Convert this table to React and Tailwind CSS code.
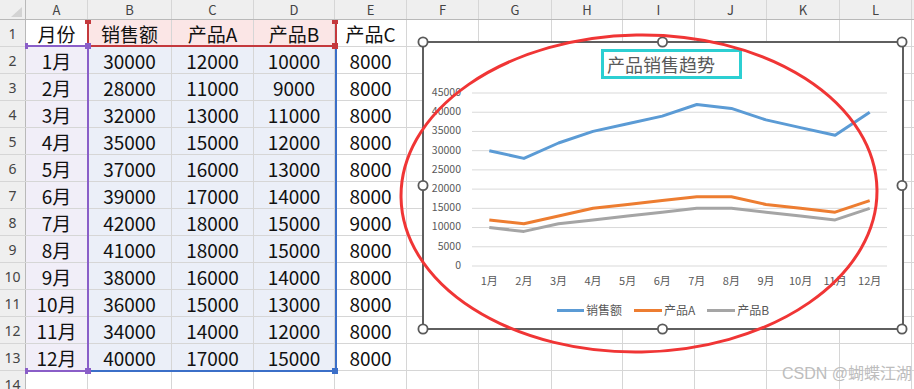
import clsx from 'clsx'

// column widths of the sheet (A..L), then a thin leftover column
const cols = [
  { k: 'A', w: 'w-[62px]' },
  { k: 'B', w: 'w-[84px]' },
  { k: 'C', w: 'w-[82px]' },
  { k: 'D', w: 'w-[81px]' },
  { k: 'E', w: 'w-[72px]' },
  { k: 'F', w: 'w-[72px]' },
  { k: 'G', w: 'w-[73px]' },
  { k: 'H', w: 'w-[71px]' },
  { k: 'I', w: 'w-[72px]' },
  { k: 'J', w: 'w-[72px]' },
  { k: 'K', w: 'w-[73px]' },
  { k: 'L', w: 'w-[72px]' },
]

const months = ['1月', '2月', '3月', '4月', '5月', '6月', '7月', '8月', '9月', '10月', '11月', '12月']
const sales = [30000, 28000, 32000, 35000, 37000, 39000, 42000, 41000, 38000, 36000, 34000, 40000]
const prodA = [12000, 11000, 13000, 15000, 16000, 17000, 18000, 18000, 16000, 15000, 14000, 17000]
const prodB = [10000, 9000, 11000, 12000, 13000, 14000, 15000, 15000, 14000, 13000, 12000, 15000]
const prodC = [8000, 8000, 8000, 8000, 8000, 8000, 9000, 8000, 8000, 8000, 8000, 8000]

const rows = [
  ['月份', '销售额', '产品A', '产品B', '产品C'],
  ...months.map((m, i) => [m, sales[i], prodA[i], prodB[i], prodC[i]]),
]

function cellBg(r, c) {
  if (r === 0 && c >= 1 && c <= 3) return 'bg-[#fbe6e6]'
  if (r > 0 && r <= 12 && c === 0) return 'bg-[#f1eef8]'
  if (r > 0 && r <= 12 && c >= 1 && c <= 3) return 'bg-[#ebeff8]'
  return 'bg-white'
}

function Sheet() {
  return (
    <div className="flex flex-col">
      {/* column header */}
      <div className="flex h-[20px] bg-[#efefef] border-b border-[#b9b9b9] text-[13px] text-[#444]">
        <div className="w-[26px] shrink-0 border-r border-[#b9b9b9] relative">
          <svg className="absolute left-[11px] top-[7px]" width="11" height="10" viewBox="0 0 11 10">
            <polygon points="11,0 11,10 0,10" fill="#d3d3d3" />
          </svg>
        </div>
        {cols.map((c) => (
          <div key={c.k} className={clsx('shrink-0 border-r border-[#d6d6d6] flex items-center justify-center', c.w)}>
            {c.k}
          </div>
        ))}
        <div className="flex-1" />
      </div>

      {Array.from({ length: 14 }).map((_, r) => (
        <div key={r} className="flex h-[27px] border-b border-[#d6d6d6] text-[19px] text-[#111]">
          <div className="w-[26px] shrink-0 bg-[#efefef] border-r border-[#b9b9b9] flex items-center justify-center text-[14px] text-[#444] font-['Noto_Sans',sans-serif]">
            {r + 1}
          </div>
          {cols.map((c, ci) => (
            <div
              key={c.k}
              className={clsx('shrink-0 border-r border-[#d6d6d6] flex items-center justify-center leading-none', c.w, cellBg(r, ci))}
            >
              {r < 13 && ci < 5 ? rows[r][ci] : ''}
            </div>
          ))}
          <div className="flex-1" />
        </div>
      ))}
    </div>
  )
}

function Selection() {
  return (
    <>
      <div className="absolute left-[89px] top-[47px] w-[248px] h-[325px] border-r-2 border-b-2 border-[#3b6fc8]" />
      <div className="absolute left-[25px] top-[45px] w-[64px] h-[327px] border-t-2 border-r-2 border-b-2 border-[#8a5ec8]" />
      <div className="absolute left-[87px] top-[20px] w-[250px] h-[27px] border-x-2 border-b-2 border-[#c4393d]" />
      {/* corner handles */}
      <div className="absolute left-[85px] top-[20px] w-[6px] h-[4px] bg-[#c4393d]" />
      <div className="absolute left-[332px] top-[20px] w-[6px] h-[4px] bg-[#c4393d]" />
      <div className="absolute left-[332px] top-[43px] w-[6px] h-[6px] bg-[#c4393d]" />
      <div className="absolute left-[85px] top-[43px] w-[6px] h-[6px] bg-[#8a5ec8]" />
      <div className="absolute left-[25px] top-[43px] w-[3px] h-[6px] bg-[#8a5ec8]" />
      <div className="absolute left-[25px] top-[368px] w-[3px] h-[6px] bg-[#8a5ec8]" />
      <div className="absolute left-[85px] top-[368px] w-[6px] h-[6px] bg-[#8a5ec8]" />
      <div className="absolute left-[332px] top-[368px] w-[6px] h-[6px] bg-[#3b6fc8]" />
    </>
  )
}

// plot geometry, in the svg's own coordinates
const X0 = 48
const X1 = 463
const Y0 = 186
const H = 173
const step = (X1 - X0) / 12
const px = (i) => X0 + step * (i + 0.5)
const py = (v) => Y0 - (v / 45000) * H
const pts = (arr) => arr.map((v, i) => `${px(i).toFixed(1)},${py(v).toFixed(1)}`).join(' ')

function Chart() {
  const ticks = [45000, 40000, 35000, 30000, 25000, 20000, 15000, 10000, 5000, 0]
  return (
    <div className="absolute left-[422px] top-[41px] w-[482px] h-[289px] border-2 border-[#5f5f5f] bg-white flex flex-col font-['Noto_Sans_CJK_SC','Noto_Sans',sans-serif] text-[#595959]">
      <div className="mt-[6px] ml-[177px] w-[141px] h-[30px] border-[3px] border-[#2ccfd2] pl-[3px] flex items-center text-[18px] leading-none">
        产品销售趋势
      </div>
      <svg className="mt-[1px]" width="478" height="215" viewBox="0 0 478 215">
        {ticks.map((t) => (
          <g key={t}>
            <line x1={X0} x2={X1} y1={py(t)} y2={py(t)} stroke="#d9d9d9" strokeWidth="1" />
            <text x="37" y={py(t)} textAnchor="end" dominantBaseline="middle" fontSize="10.5" fill="#595959">
              {t}
            </text>
          </g>
        ))}
        <polyline points={pts(sales)} fill="none" stroke="#5b9bd5" strokeWidth="3" strokeLinejoin="round" />
        <polyline points={pts(prodA)} fill="none" stroke="#ed7d31" strokeWidth="3" strokeLinejoin="round" />
        <polyline points={pts(prodB)} fill="none" stroke="#a5a5a5" strokeWidth="3" strokeLinejoin="round" />
        {months.map((m, i) => (
          <text key={m} x={px(i)} y="202" textAnchor="middle" dominantBaseline="middle" fontSize="11" fill="#595959">
            {m}
          </text>
        ))}
      </svg>
      <div className="mt-[6px] h-[18px] flex items-center justify-center gap-[12px] text-[12px]">
        <div className="flex items-center gap-[2px]">
          <span className="w-[27px] h-[3px] bg-[#5b9bd5]" />
          <span>销售额</span>
        </div>
        <div className="flex items-center gap-[2px]">
          <span className="w-[28px] h-[3px] bg-[#ed7d31]" />
          <span>产品A</span>
        </div>
        <div className="flex items-center gap-[2px]">
          <span className="w-[28px] h-[3px] bg-[#a5a5a5]" />
          <span>产品B</span>
        </div>
      </div>
    </div>
  )
}

function Annotations() {
  const handles = [
    [423, 42], [662.5, 42], [902, 42],
    [423, 185.5], [902, 185.5],
    [423, 329], [662.5, 329], [902, 329],
  ]
  return (
    <svg className="absolute left-0 top-0 pointer-events-none" width="914" height="389" viewBox="0 0 914 389">
      {handles.map(([x, y]) => (
        <circle key={`${x}-${y}`} cx={x} cy={y} r="4.6" fill="#fff" stroke="#5a5a5a" strokeWidth="1.8" />
      ))}
      <ellipse cx="639" cy="193.5" rx="238" ry="158.5" fill="none" stroke="#f03535" strokeWidth="3" transform="rotate(-1 639 193.5)" />
    </svg>
  )
}

export default function App() {
  return (
    <div className="relative w-[914px] h-[389px] overflow-hidden bg-white font-['Noto_Sans_CJK_SC','Noto_Sans',sans-serif]">
      <Sheet />
      <Selection />
      <Chart />
      <Annotations />
      <div className="absolute right-[2px] top-[363px] text-[16px] leading-[22px] text-[#bdbdbd] font-['Liberation_Sans','Noto_Sans_CJK_SC',sans-serif]">
        CSDN @蝴蝶江湖
      </div>
    </div>
  )
}
